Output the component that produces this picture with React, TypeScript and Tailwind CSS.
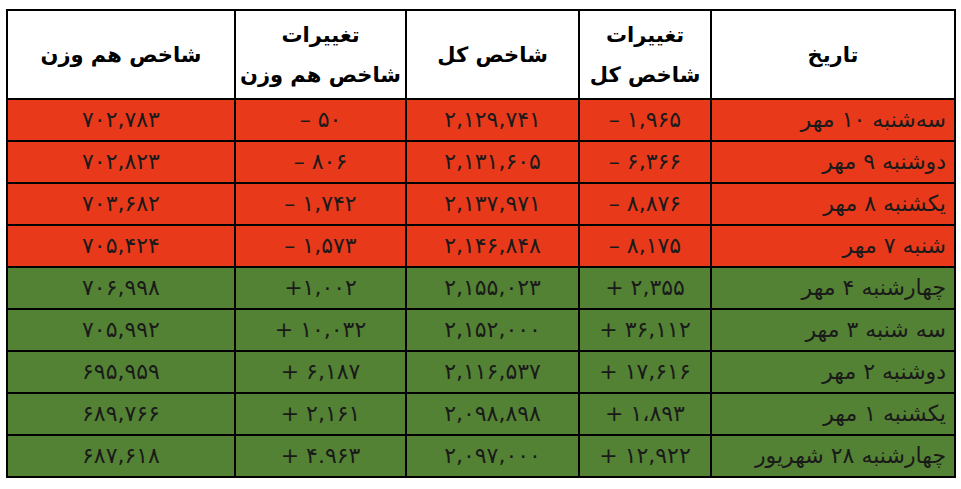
import React from 'react';

// rows of the daily index table (newest first)
const rows = [
  { date: 'سه‌شنبه ۱۰ مهر', totalChange: '– ۱,۹۶۵', total: '۲,۱۲۹,۷۴۱', eqChange: '– ۵۰', eq: '۷۰۲,۷۸۳', up: false },
  { date: 'دوشنبه ۹ مهر', totalChange: '– ۶,۳۶۶', total: '۲,۱۳۱,۶۰۵', eqChange: '– ۸۰۶', eq: '۷۰۲,۸۲۳', up: false },
  { date: 'یکشنبه ۸ مهر', totalChange: '– ۸,۸۷۶', total: '۲,۱۳۷,۹۷۱', eqChange: '– ۱,۷۴۲', eq: '۷۰۳,۶۸۲', up: false },
  { date: 'شنبه ۷ مهر', totalChange: '– ۸,۱۷۵', total: '۲,۱۴۶,۸۴۸', eqChange: '– ۱,۵۷۳', eq: '۷۰۵,۴۲۴', up: false },
  { date: 'چهارشنبه ۴ مهر', totalChange: '+ ۲,۳۵۵', total: '۲,۱۵۵,۰۲۳', eqChange: '+۱,۰۰۲', eq: '۷۰۶,۹۹۸', up: true },
  { date: 'سه شنبه ۳ مهر', totalChange: '+ ۳۶,۱۱۲', total: '۲,۱۵۲,۰۰۰', eqChange: '+ ۱۰,۰۳۲', eq: '۷۰۵,۹۹۲', up: true },
  { date: 'دوشنبه ۲ مهر', totalChange: '+ ۱۷,۶۱۶', total: '۲,۱۱۶,۵۳۷', eqChange: '+ ۶,۱۸۷', eq: '۶۹۵,۹۵۹', up: true },
  { date: 'یکشنبه ۱ مهر', totalChange: '+ ۱،۸۹۳', total: '۲,۰۹۸,۸۹۸', eqChange: '+ ۲,۱۶۱', eq: '۶۸۹,۷۶۶', up: true },
  { date: 'چهارشنبه ۲۸ شهریور', totalChange: '+ ۱۲,۹۲۲', total: '۲,۰۹۷,۰۰۰', eqChange: '+ ۴.۹۶۳', eq: '۶۸۷,۶۱۸', up: true },
];

const cell = 'border-2 border-black h-[42px] p-0 text-[22px] leading-none text-[#1a1a1a]';
const head = 'border-2 border-black text-[21px] font-bold';

const Num = ({ v }: { v: string }) => <span dir="ltr">{v}</span>;

export default function App() {
  return (
    <div className="bg-white w-[961px] h-[489px] pt-[9px] pl-[6px]" style={{ fontFamily: '"DejaVu Sans", sans-serif' }}>
      <table dir="rtl" className="table-fixed border-collapse w-[948px]">
        <colgroup>
          <col className="w-[244px]" />
          <col className="w-[132px]" />
          <col className="w-[173px]" />
          <col className="w-[171px]" />
          <col className="w-[228px]" />
        </colgroup>
        <thead>
          <tr className="h-[89px] bg-white">
            <th className={`${head} pt-[2px]`}>تاریخ</th>
            <th className={`${head} leading-[40px]`}>
              تغییرات
              <br />
              شاخص کل
            </th>
            <th className={`${head} pt-[2px]`}>شاخص کل</th>
            <th className={`${head} leading-[40px]`}>
              تغییرات
              <br />
              شاخص هم وزن
            </th>
            <th className={`${head} pt-[2px]`}>شاخص هم وزن</th>
          </tr>
        </thead>
        <tbody>
          {rows.map((r) => (
            <tr key={r.date} className={r.up ? 'bg-[#538234]' : 'bg-[#e8391a]'}>
              <td className={`${cell} text-right pr-[8px]`}>{r.date}</td>
              <td className={`${cell} text-center`}><Num v={r.totalChange} /></td>
              <td className={`${cell} text-center`}><Num v={r.total} /></td>
              <td className={`${cell} text-center`}><Num v={r.eqChange} /></td>
              <td className={`${cell} text-center`}><Num v={r.eq} /></td>
            </tr>
          ))}
        </tbody>
      </table>
    </div>
  );
}
